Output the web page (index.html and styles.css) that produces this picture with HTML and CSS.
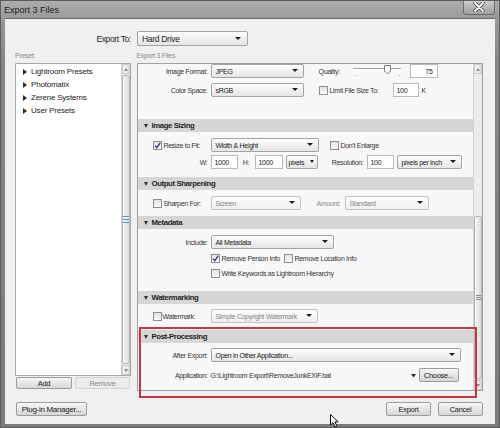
FILE: index.html
```html
<!DOCTYPE html>
<html lang="en">
<head>
    <meta charset="UTF-8">
    <title>Export 3 Files</title>
    <link rel="stylesheet" href="styles.css">
</head>
<body>
<div class="window">
    <div class="titlebar">
        <span class="title">Export 3 Files</span>
        <span class="close">
            <svg width="12" height="10" viewBox="0 0 12 10">
                <path d="M2 1 L10 9 M10 1 L2 9" stroke="#3a3a3a" stroke-width="3.4" stroke-linecap="round"/>
                <path d="M2 1 L10 9 M10 1 L2 9" stroke="#fff" stroke-width="1.8" stroke-linecap="round"/>
            </svg>
        </span>
    </div>

    <div class="dialog">
        <div class="export-to">
            <label>Export To:</label>
            <div class="select big">Hard Drive</div>
        </div>

        <div class="cols">
            <div class="left">
                <div class="caption">Preset:</div>
                <div class="preset-box">
                    <ul class="presets">
                        <li>Lightroom Presets</li>
                        <li>Photomatix</li>
                        <li>Zerene Systems</li>
                        <li>User Presets</li>
                    </ul>
                    <div class="vscroll">
                        <div class="sb-btn up"></div>
                        <div class="thumb"><span class="grip blue"></span></div>
                        <div class="sb-btn down"></div>
                    </div>
                </div>
                <div class="preset-btns">
                    <button class="btn add">Add</button>
                    <button class="btn off remove">Remove</button>
                </div>
            </div>

            <div class="right">
                <div class="caption">Export 3 Files</div>
                <div class="panel">
                    <div class="sections">
                        <!-- file settings (scrolled) -->
                        <div class="sec-body b-file">
                            <div class="row">
                                <span class="lbl">Image Format:</span>
                                <div class="select w93">JPEG</div>
                                <span class="quality">Quality:</span>
                                <div class="slider">
                                    <span class="track"></span>
                                    <svg class="knob" width="8" height="10" viewBox="0 0 8 10">
                                        <path d="M0.5 0.5 H6.5 V6 L3.5 9 L0.5 6 Z" fill="#fff" stroke="#7a7a7a"/>
                                    </svg>
                                    <span class="tick t1"></span>
                                    <span class="tick t2"></span>
                                </div>
                                <div class="input num w28">75</div>
                            </div>
                            <div class="row r2">
                                <span class="lbl">Color Space:</span>
                                <div class="select w93">sRGB</div>
                                <span class="check ml15"></span>
                                <span class="limit">Limit File Size To:</span>
                                <div class="input w26">100</div>
                                <span class="unit">K</span>
                            </div>
                        </div>

                        <div class="sec-head">Image Sizing</div>
                        <div class="sec-body b-size">
                            <div class="row">
                                <span class="lbl chk"><span class="check on"><svg width="7" height="7" viewBox="0 0 7 7"><path d="M1 3.6 L2.8 5.6 L6.2 0.8" fill="none" stroke="#2d3f70" stroke-width="1.4"/></svg></span>Resize to Fit:</span>
                                <div class="select w108">Width &amp; Height</div>
                                <span class="check ml11"></span>
                                <span class="opt-text">Don't Enlarge</span>
                            </div>
                            <div class="row r3">
                                <span class="lbl">W:</span>
                                <div class="input w27">1000</div>
                                <span class="hl">H:</span>
                                <div class="input w28">1000</div>
                                <div class="select tight w32 ml3">pixels</div>
                                <span class="res">Resolution:</span>
                                <div class="input w27">100</div>
                                <div class="select w65 ml3">pixels per inch</div>
                            </div>
                        </div>

                        <div class="sec-head">Output Sharpening</div>
                        <div class="sec-body b-sharp">
                            <div class="row">
                                <span class="lbl chk"><span class="check"></span>Sharpen For:</span>
                                <div class="select off w90">Screen</div>
                                <span class="amount">Amount:</span>
                                <div class="select off w84">Standard</div>
                            </div>
                        </div>

                        <div class="sec-head">Metadata</div>
                        <div class="sec-body b-meta">
                            <div class="row">
                                <span class="lbl">Include:</span>
                                <div class="select w123">All Metadata</div>
                            </div>
                            <div class="row indent m2">
                                <span class="opt"><span class="check on"><svg width="7" height="7" viewBox="0 0 7 7"><path d="M1 3.6 L2.8 5.6 L6.2 0.8" fill="none" stroke="#2d3f70" stroke-width="1.4"/></svg></span>Remove Person Info</span>
                                <span class="opt"><span class="check"></span>Remove Location Info</span>
                            </div>
                            <div class="row indent m1">
                                <span class="opt"><span class="check"></span>Write Keywords as Lightroom Hierarchy</span>
                            </div>
                        </div>

                        <div class="sec-head">Watermarking</div>
                        <div class="sec-body b-water">
                            <div class="row">
                                <span class="lbl chk wm"><span class="check"></span>Watermark:</span>
                                <div class="select off w107">Simple Copyright Watermark</div>
                            </div>
                        </div>

                        <div class="sec-head">Post-Processing</div>
                        <div class="sec-body b-post">
                            <div class="row">
                                <span class="lbl">After Export:</span>
                                <div class="select w250">Open in Other Application...</div>
                            </div>
                            <div class="row r6">
                                <span class="lbl">Application:</span>
                                <span class="path">G:\Lightroom Export\RemoveJunkEXIF.bat</span>
                                <span class="mini-arrow"></span>
                                <button class="btn choose">Choose...</button>
                            </div>
                        </div>
                    </div>
                    <div class="vscroll">
                        <div class="sb-btn up"></div>
                        <div class="sb-gap"></div>
                        <div class="thumb"><span class="grip"></span></div>
                        <div class="sb-btn down"></div>
                    </div>
                    <div class="highlight"></div>
                </div>
            </div>
        </div>

        <div class="footer">
            <button class="btn plugin">Plug-in Manager...</button>
            <button class="btn export">Export</button>
            <button class="btn cancel">Cancel</button>
        </div>
    </div>

    <svg class="cursor" width="10" height="14" viewBox="0 0 10 14">
        <path d="M0.5 0.5 L0.5 11 L3 8.6 L5 12.8 L6.8 12 L4.9 7.9 L8.2 7.9 Z" fill="#fff" stroke="#111" stroke-width="1"/>
    </svg>
</div>
</body>
</html>
```

FILE: styles.css
```css
* {
    box-sizing: border-box;
}

body {
    margin: 0;
    background: #6f6f6f;
    font-family: "Liberation Sans", Arial, sans-serif;
    font-size: 7px;
    letter-spacing: -0.3px;
    color: #2b2b2b;
}

.window {
    position: relative;
    width: 500px;
    height: 428px;
    padding: 0 4px 4px;
    background: linear-gradient(#adadad, #999 18px, #858585 60px, #7c7c7c);
    border: 1px solid #5c5c5c;
    overflow: hidden;
}

/* title bar */
.titlebar {
    display: flex;
    align-items: center;
    height: 17px;
    margin: 0 -4px;
    padding-left: 3px;
}

.title {
    font-size: 9px;
    letter-spacing: 0;
    color: #1b1b1b;
}

.close {
    align-self: flex-start;
    display: flex;
    align-items: center;
    justify-content: center;
    width: 32px;
    height: 15px;
    margin-left: auto;
    margin-right: 4px;
    margin-top: -1px;
    border: 1px solid #6d6d6d;
    border-top: none;
    border-radius: 0 0 3px 3px;
    background: linear-gradient(#d2d2d2, #b0b0b0 60%, #a2a2a2);
}

/* dialog body */
.dialog {
    height: 406px;
    padding: 12px 12px 0 10px;
    background: #f0f0f0;
    border-top: 1px solid #6c6c6c;
}

.export-to {
    display: flex;
    align-items: center;
    gap: 6px;
    height: 15px;
}

.export-to label {
    width: 116px;
    text-align: right;
    font-size: 8.5px;
    letter-spacing: -0.35px;
    color: #1e1e1e;
}

.cols {
    display: flex;
    gap: 6px;
    height: 340px;
    margin-top: 5px;
}

.caption {
    height: 12px;
    line-height: 9px;
    color: #8d8d8d;
}

.left {
    width: 116px;
    display: flex;
    flex-direction: column;
}

.right {
    width: 348px;
}

.preset-box {
    display: flex;
    height: 313px;
    border: 1px solid #a9a9a9;
    background: #fff;
}

.presets {
    flex: 1;
    list-style: none;
    margin: 0;
    padding: 1px 0 0 7px;
    font-size: 8px;
    letter-spacing: -0.2px;
    color: #262626;
}

.presets li {
    display: flex;
    align-items: center;
    height: 13px;
}

.presets li:before {
    content: "";
    border-left: 4px solid #2a2a2a;
    border-top: 3px solid transparent;
    border-bottom: 3px solid transparent;
    margin-right: 4px;
}

.preset-btns {
    display: flex;
    gap: 3px;
    height: 12px;
    margin: 1px 0 0 1px;
}

/* scroll bars */
.vscroll {
    display: flex;
    flex-direction: column;
    width: 9px;
    border-left: 1px solid #d3d3d3;
    background: #ececec;
}

.sb-btn {
    display: flex;
    align-items: center;
    justify-content: center;
    height: 10px;
    border: 1px solid #c9c9c9;
    background: linear-gradient(90deg, #f6f6f6, #e2e2e2);
}

.sb-btn:before {
    content: "";
    border-left: 2.5px solid transparent;
    border-right: 2.5px solid transparent;
}

.sb-btn.up:before {
    border-bottom: 3px solid #8a8a8a;
}

.sb-btn.down:before {
    border-top: 3px solid #8a8a8a;
}

.thumb {
    flex: 1;
    display: flex;
    align-items: center;
    justify-content: center;
    margin: 1px 0;
    border: 1px solid #b3b3b3;
    border-radius: 2px;
    background: linear-gradient(90deg, #f7f7f7, #dcdcdc);
}

.sb-gap {
    height: 141px;
}

.grip {
    width: 5px;
    height: 5px;
    border-top: 1px solid #8a8a8a;
    border-bottom: 1px solid #8a8a8a;
    background: linear-gradient(transparent 1px, #8a8a8a 1px, #8a8a8a 2px, transparent 2px);
}

.grip.blue {
    width: 6px;
    height: 7px;
    border-color: #4c9ad8;
    background: linear-gradient(transparent 2px, #4c9ad8 2px, #4c9ad8 3px, transparent 3px);
}

/* export settings panel */
.panel {
    position: relative;
    display: flex;
    height: 328px;
    border: 1px solid #a0a0a0;
    background: #f8f8f8;
}

.sections {
    flex: 1;
    display: flex;
    flex-direction: column;
}

.sec-head {
    display: flex;
    align-items: center;
    height: 13px;
    padding-left: 6px;
    background: #d6d6d6;
    font-weight: bold;
    font-size: 7.8px;
    letter-spacing: -0.4px;
    color: #1f1f1f;
}

.sec-head:before {
    content: "";
    border-top: 4px solid #333;
    border-left: 2.5px solid transparent;
    border-right: 2.5px solid transparent;
    margin-right: 4px;
}

.sec-body {
    padding-top: 6px;
}

.b-file {
    height: 55px;
    padding-top: 0;
}

.b-size {
    height: 45px;
}

.b-sharp {
    height: 26px;
}

.b-meta {
    height: 62px;
}

.b-water {
    height: 26px;
    padding-top: 5px;
}

.b-post {
    flex: 1;
    padding-top: 5px;
}

.row {
    display: flex;
    align-items: center;
    height: 14px;
    white-space: nowrap;
}

.r2 { margin-top: 5px; }
.r3 { margin-top: 3px; }
.r6 { margin-top: 6px; }
.m1 { margin-top: 1px; }
.m2 { margin-top: 2px; }

.lbl {
    flex-shrink: 0;
    width: 73px;
    padding-right: 3px;
    text-align: right;
    color: #333;
}

.lbl.chk {
    display: flex;
    align-items: center;
    gap: 2px;
    padding-left: 15px;
    text-align: left;
}

.lbl.wm {
    gap: 1px;
}

.indent {
    padding-left: 73px;
}

.opt {
    display: flex;
    align-items: center;
    gap: 2px;
    width: 73px;
    color: #333;
}

.opt-text {
    margin-left: 2px;
    color: #333;
}

/* controls */
.select {
    position: relative;
    flex-shrink: 0;
    display: flex;
    align-items: center;
    height: 14px;
    padding-left: 4px;
    border: 1px solid #a3a3a3;
    border-radius: 2px;
    background: linear-gradient(#fdfdfd, #e5e5e5);
    color: #222;
    overflow: hidden;
}

.select:after {
    content: "";
    position: absolute;
    right: 5px;
    top: 4px;
    border-top: 3px solid #1e1e1e;
    border-left: 3px solid transparent;
    border-right: 3px solid transparent;
}

.select.tight {
    padding-left: 2px;
    letter-spacing: -0.4px;
}

.select.tight:after {
    right: 3px;
    border-left-width: 2.5px;
    border-right-width: 2.5px;
}

.select.big {
    width: 111px;
    height: 15px;
    font-size: 8.5px;
    letter-spacing: -0.3px;
}

.select.big:after {
    right: 6px;
    top: 5px;
}

.select.off {
    color: #858585;
    border-color: #c2c2c2;
    background: linear-gradient(#fcfcfc, #f0f0f0);
}

.input {
    flex-shrink: 0;
    display: flex;
    align-items: center;
    height: 14px;
    padding-left: 3px;
    border: 1px solid #b9b9b9;
    background: #fff;
    color: #222;
}

.input.num {
    justify-content: flex-end;
    padding-right: 4px;
}

.w26 { width: 26px; }
.w27 { width: 27px; }
.w28 { width: 28px; }
.w32 { width: 32px; }
.w65 { width: 65px; }
.w84 { width: 84px; }
.w90 { width: 90px; }
.w93 { width: 93px; }
.w107 { width: 107px; }
.w108 { width: 108px; }
.w123 { width: 123px; }
.w250 { width: 250px; }
.ml3 { margin-left: 3px; }
.ml11 { margin-left: 11px; }
.ml15 { margin-left: 15px; }

.check {
    flex-shrink: 0;
    display: flex;
    align-items: center;
    justify-content: center;
    width: 9px;
    height: 9px;
    border: 1px solid #8f8f8f;
    background: linear-gradient(#e2e2e2, #fbfbfb);
}

.quality {
    width: 34px;
    margin-left: 15px;
    color: #333;
}

.slider {
    position: relative;
    width: 48px;
    height: 14px;
    margin-right: 9px;
}

.slider .track {
    position: absolute;
    left: 0;
    right: 0;
    top: 4px;
    height: 2px;
    border-top: 1px solid #a2a2a2;
    border-bottom: 1px solid #fff;
}

.slider .knob {
    position: absolute;
    left: 31px;
    top: 1px;
}

.slider .tick {
    position: absolute;
    top: 11px;
    width: 1px;
    height: 1px;
    background: #a5a5a5;
}

.tick.t1 { left: 3px; }
.tick.t2 { left: 46px; }

.limit {
    width: 63px;
    margin-left: 2px;
    color: #333;
}

.unit {
    margin-left: 3px;
    color: #333;
}

.hl {
    width: 17px;
    text-align: center;
    color: #333;
}

.res {
    width: 49px;
    padding-right: 3px;
    text-align: right;
    color: #333;
}

.amount {
    width: 44px;
    padding-right: 4px;
    text-align: right;
    color: #8a8a8a;
}

.path {
    width: 200px;
    color: #333;
}

.mini-arrow {
    width: 5px;
    margin-right: 3px;
    border-top: 3px solid #333;
    border-left: 2.5px solid transparent;
    border-right: 2.5px solid transparent;
}

/* buttons */
.btn {
    display: flex;
    align-items: center;
    justify-content: center;
    height: 14px;
    padding: 0;
    border: 1px solid #9c9c9c;
    border-radius: 2px;
    background: linear-gradient(#f8f8f8, #e6e6e6 50%, #d6d6d6);
    font-family: "Liberation Sans", Arial, sans-serif;
    font-size: 7.5px;
    letter-spacing: -0.3px;
    color: #222;
}

.btn.add {
    width: 56px;
    height: 12px;
}

.btn.remove {
    width: 55px;
    height: 12px;
}

.btn.off {
    border-color: #d2d2d2;
    background: #ececec;
    color: #8a8a8a;
}

.btn.choose {
    width: 40px;
}

.footer {
    display: flex;
    align-items: center;
    height: 14px;
    margin-top: 11px;
}

.btn.plugin {
    width: 71px;
    margin-left: 1px;
    font-size: 8px;
}

.btn.export {
    width: 45px;
    margin-left: auto;
}

.btn.cancel {
    width: 45px;
    margin-left: 7px;
}

/* red annotation frame over the post-processing section */
.highlight {
    position: absolute;
    left: 1px;
    top: 263px;
    width: 338px;
    height: 71px;
    border: 2px solid #c9363c;
    pointer-events: none;
}

.cursor {
    position: absolute;
    left: 329px;
    top: 413px;
}
```
